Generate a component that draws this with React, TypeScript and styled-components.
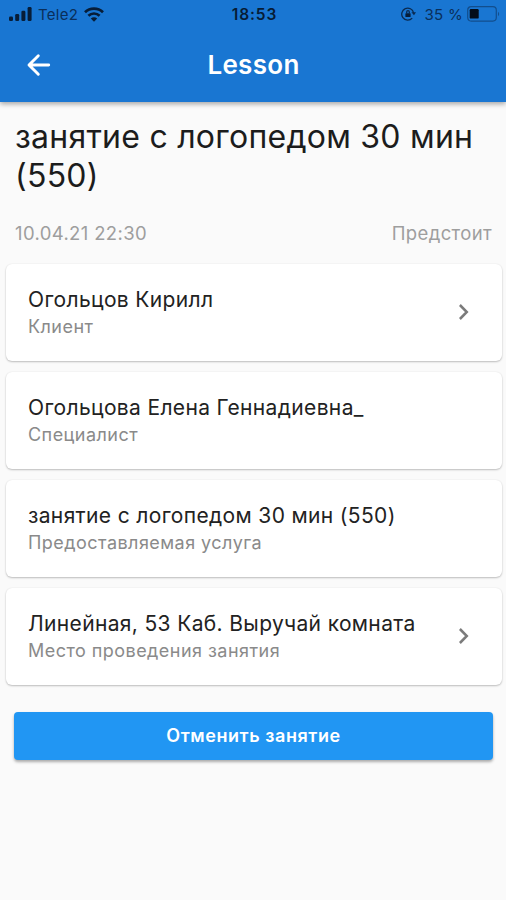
import React from 'react';
import styled, { createGlobalStyle } from 'styled-components';

const GlobalStyle = createGlobalStyle`
  * { box-sizing: border-box; }
  body {
    margin: 0;
    background: #fafafa;
    font-family: Inter, "Liberation Sans", sans-serif;
  }
`;

const Screen = styled.div`
  width: 506px;
  height: 900px;
  background: #fafafa;
  overflow: hidden;
`;

const Header = styled.header`
  height: 102px;
  background: #1976d2;
  box-shadow: 0 2px 5px rgba(0, 0, 0, 0.35);
`;

const StatusBar = styled.div`
  height: 28px;
  display: grid;
  grid-template-columns: 1fr auto 1fr;
  align-items: center;
  padding: 0 6px 0 9px;
  color: #0a2f5a;
  font-size: 15px;
  letter-spacing: 0.3px;
`;

const StatusGroup = styled.div<{ $end?: boolean }>`
  display: flex;
  align-items: center;
  gap: ${p => (p.$end ? 4 : 6)}px;
  justify-content: ${p => (p.$end ? 'flex-end' : 'flex-start')};

  svg { display: block; }
`;

const Percent = styled.span`
  margin-left: 4px;
`;

const Clock = styled.span`
  color: #061c36;
  font-size: 15.5px;
  font-weight: 600;
  letter-spacing: 0.85px;
`;

const NavBar = styled.div`
  height: 74px;
  display: grid;
  grid-template-columns: 60px 1fr 59px;
  align-items: center;
`;

const BackButton = styled.button`
  border: 0;
  padding: 0 0 0 26px;
  background: none;
  display: flex;
`;

const NavTitle = styled.h1`
  margin: 0;
  text-align: center;
  color: #fff;
  font-size: 26px;
  line-height: 32px;
  font-weight: 600;
  letter-spacing: 0.3px;
`;

const LessonTitle = styled.h2`
  margin: 15px 14px 0 15px;
  color: #1c1c1c;
  font-size: 32px;
  line-height: 39px;
  font-weight: 400;
  letter-spacing: 0.25px;
`;

const Meta = styled.div`
  margin: 26px 14px 0 15px;
  display: flex;
  justify-content: space-between;
  color: #9e9e9e;
  font-size: 18.5px;
  line-height: 24px;
  letter-spacing: 0.36px;
`;

const CardList = styled.div`
  margin: 19px 4px 0 6px;
  display: flex;
  flex-direction: column;
  gap: 11px;
`;

const Card = styled.section`
  height: 97px;
  padding: 0 33px 0 22px;
  display: flex;
  align-items: center;
  justify-content: space-between;
  background: #fff;
  border-radius: 6px;
  box-shadow: 0 1px 2px rgba(0, 0, 0, 0.24), 0 0 2px rgba(0, 0, 0, 0.06);
`;

const CardTitle = styled.div`
  color: #222;
  font-size: 21px;
  line-height: 28px;
  letter-spacing: 0.35px;
`;

const CardCaption = styled.div`
  color: #8a8a8a;
  font-size: 18px;
  line-height: 26px;
  letter-spacing: 0.46px;
`;

const CancelButton = styled.button`
  display: block;
  width: 479px;
  height: 48px;
  margin: 27px 13px 0 14px;
  padding: 0 0 2px;
  border: 0;
  border-radius: 4px;
  background: #2196f3;
  color: #fff;
  font: 600 18px Inter, "Liberation Sans", sans-serif;
  letter-spacing: 0.55px;
  box-shadow: 0 2px 3px rgba(0, 0, 0, 0.32);
`;

const SignalIcon = () => (
  <svg width="23" height="14" viewBox="0 0 23 14" fill="#071d38">
    <rect x="0" y="9.6" width="4" height="4.4" rx="1.3" />
    <rect x="6.2" y="7" width="4" height="7" rx="1.3" />
    <rect x="12.4" y="3.8" width="4" height="10.2" rx="1.3" />
    <rect x="18.6" y="0" width="4" height="14" rx="1.3" />
  </svg>
);

const WifiIcon = () => (
  <svg width="20" height="15" viewBox="0 0 20 15" fill="none" stroke="#071d38" strokeWidth="2.7">
    <path d="M1 5.3C6 .4 14 .4 19 5.3" />
    <path d="M4.4 8.8c3.2-3.1 8-3.1 11.2 0" />
    <path d="M10 14.7 6.8 11.6c1.8-1.7 4.6-1.7 6.4 0Z" fill="#071d38" stroke="none" />
  </svg>
);

const RotationLockIcon = () => (
  <svg width="15" height="14" viewBox="0 0 15 14" fill="none" stroke="#0a2a50" strokeWidth="1.3">
    <path d="M12.6 5.8A6 6 0 1 0 11.2 11.1" />
    <path d="m10.4 5.3 2.6 3 2-3Z" fill="#0a2a50" stroke="none" />
    <rect x="4.4" y="6.2" width="5.2" height="3.8" rx=".6" fill="#071d38" stroke="none" />
    <path d="M5.7 6.6V5a1.3 1.3 0 0 1 2.6 0v1.6" />
  </svg>
);

const BatteryIcon = () => (
  <svg width="33" height="16" viewBox="0 0 33 16">
    <rect x=".7" y=".7" width="28.6" height="14.4" rx="3.5" fill="none" stroke="#124e8d" strokeWidth="1.2" />
    <rect x="2.7" y="3" width="9" height="9.6" rx="1.2" fill="#030d1a" />
    <path d="M31 5.7c1.5.7 1.5 3.7 0 4.4Z" fill="#124e8d" />
  </svg>
);

const BackIcon = () => (
  <svg width="26" height="24" viewBox="0 0 26 24" fill="none" stroke="#fff" strokeWidth="2.9" strokeLinecap="round" strokeLinejoin="round">
    <path d="M12.3 2.8 3 12l9.3 9.2M3.5 12h19.2" />
  </svg>
);

const ChevronIcon = () => (
  <svg width="11" height="18" viewBox="0 0 11 18" fill="none" stroke="#7b7b7b" strokeWidth="2.5">
    <path d="m1.9 1 6.9 7-6.9 7" />
  </svg>
);

const details = [
  { title: 'Огольцов Кирилл', caption: 'Клиент', link: true },
  { title: 'Огольцова Елена Геннадиевна_', caption: 'Специалист', link: false },
  { title: 'занятие с логопедом 30 мин (550)', caption: 'Предоставляемая услуга', link: false },
  { title: 'Линейная, 53 Каб. Выручай комната', caption: 'Место проведения занятия', link: true },
];

export default function App() {
  return (
    <Screen>
      <GlobalStyle />
      <Header>
        <StatusBar>
          <StatusGroup>
            <SignalIcon />
            <span>Tele2</span>
            <WifiIcon />
          </StatusGroup>
          <Clock>18:53</Clock>
          <StatusGroup $end>
            <RotationLockIcon />
            <Percent>35 %</Percent>
            <BatteryIcon />
          </StatusGroup>
        </StatusBar>
        <NavBar>
          <BackButton aria-label="Back"><BackIcon /></BackButton>
          <NavTitle>Lesson</NavTitle>
        </NavBar>
      </Header>
      <main>
        <LessonTitle>занятие с логопедом 30 мин (550)</LessonTitle>
        <Meta>
          <span>10.04.21 22:30</span>
          <span>Предстоит</span>
        </Meta>
        <CardList>
          {details.map(item => (
            <Card key={item.caption}>
              <div>
                <CardTitle>{item.title}</CardTitle>
                <CardCaption>{item.caption}</CardCaption>
              </div>
              {item.link && <ChevronIcon />}
            </Card>
          ))}
        </CardList>
        <CancelButton>Отменить занятие</CancelButton>
      </main>
    </Screen>
  );
}
